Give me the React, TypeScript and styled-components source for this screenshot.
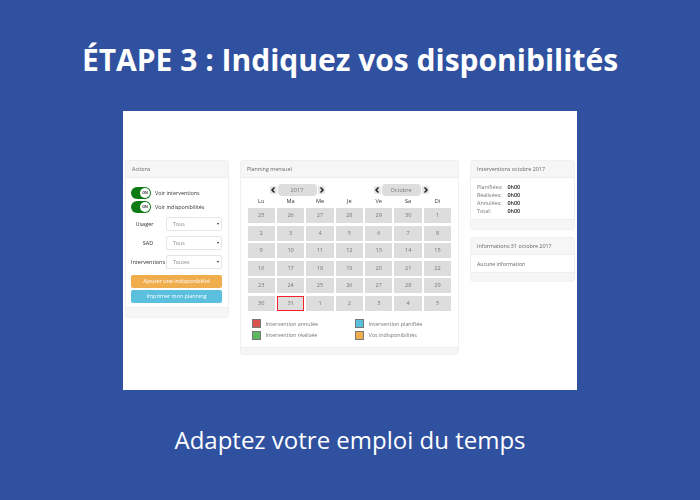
import React from "react";
import styled, { createGlobalStyle } from "styled-components";

const GlobalStyle = createGlobalStyle`
  html, body { margin: 0; padding: 0; }
  body { width: 700px; height: 500px; background: #30519f; overflow: hidden; font-family: "Open Sans", sans-serif; }
`;

const weeks = [
  ["25", "26", "27", "28", "29", "30", "1"],
  ["2", "3", "4", "5", "6", "7", "8"],
  ["9", "10", "11", "12", "13", "14", "15"],
  ["16", "17", "18", "19", "20", "21", "22"],
  ["23", "24", "25", "26", "27", "28", "29"],
  ["30", "31", "1", "2", "3", "4", "5"],
];
const dayNames = ["Lu", "Ma", "Me", "Je", "Ve", "Sa", "Di"];

const Slide = styled.div`
  width: 700px;
  height: 500px;
  display: flex;
  flex-direction: column;
  align-items: center;
  color: #fff;
`;

const Title = styled.h1`
  margin: 0;
  height: 111px;
  padding-top: 40px;
  box-sizing: border-box;
  font-size: 30px;
  line-height: 40px;
  font-weight: 700;
`;

const Subtitle = styled.p`
  margin: 0;
  padding-top: 34px;
  font-size: 24px;
  line-height: 32px;
`;

const Shot = styled.div`
  width: 454px;
  height: 279px;
  box-sizing: border-box;
  background: #fff;
  padding: 49px 2px 0;
  display: flex;
  align-items: flex-start;
  justify-content: space-between;
  color: #555;
  filter: blur(0.25px);
`;

const Column = styled.div`
  display: flex;
  flex-direction: column;
  gap: 7px;
`;

const Panel = styled.section<{ $width: number; $height: number }>`
  width: ${(p) => p.$width}px;
  height: ${(p) => p.$height}px;
  box-sizing: border-box;
  background: #fff;
  border: 1px solid #f0f0f0;
  border-radius: 3px;
  display: flex;
  flex-direction: column;
  overflow: hidden;
`;

const PanelHeader = styled.header`
  height: 16px;
  flex: none;
  padding-left: 6px;
  background: #f6f6f6;
  border-bottom: 1px solid #eeeeee;
  font-size: 5.4px;
  line-height: 16px;
  color: #666;
`;

const PanelBody = styled.div`
  flex: 1;
  min-height: 0;
`;

const PanelFooter = styled.footer<{ $height: number }>`
  height: ${(p) => p.$height}px;
  flex: none;
  background: #f6f6f6;
  border-top: 1px solid #eeeeee;
`;

const ActionsBody = styled(PanelBody)`
  padding: 8px 6px 0 5px;
  display: flex;
  flex-direction: column;
`;

const SwitchRow = styled.div`
  height: 14px;
  flex: none;
  display: flex;
  align-items: center;
  gap: 4px;
  font-size: 5.4px;
  color: #333;
`;

const Switch = styled.span`
  width: 20px;
  height: 12px;
  border-radius: 6px;
  background: #0f7a14;
  display: flex;
  align-items: center;
  justify-content: flex-end;
  padding-right: 1px;
  box-sizing: border-box;
`;

const SwitchKnob = styled.span`
  width: 10px;
  height: 10px;
  border-radius: 50%;
  background: #fff;
  font-size: 3.5px;
  line-height: 10px;
  text-align: center;
  font-weight: 700;
  color: #333;
`;

const FieldsWrap = styled.div`
  margin-top: 3px;
  display: flex;
  flex-direction: column;
  gap: 5px;
`;

const FieldRow = styled.div`
  height: 14px;
  display: flex;
  align-items: center;
  justify-content: space-between;
`;

const FieldLabel = styled.label<{ $inset?: number }>`
  width: 34px;
  box-sizing: border-box;
  padding-right: ${(p) => p.$inset ?? 0}px;
  font-size: 5.5px;
  text-align: center;
  color: #333;
`;

const Select = styled.div`
  width: 56px;
  height: 14px;
  box-sizing: border-box;
  border: 1px solid #e6e6e6;
  border-radius: 2px;
  padding: 0 2px 0 6px;
  display: flex;
  align-items: center;
  justify-content: space-between;
  font-size: 5.2px;
  color: #888;
`;

const Caret = styled.span`
  width: 0;
  height: 0;
  border-left: 1.5px solid transparent;
  border-right: 1.5px solid transparent;
  border-top: 2px solid #333;
`;

const Buttons = styled.div`
  margin-top: 6px;
  display: flex;
  flex-direction: column;
  gap: 2px;
`;

const ActionButton = styled.button<{ $color: string }>`
  width: 91px;
  height: 13px;
  padding: 0;
  border: none;
  border-radius: 2px;
  background: ${(p) => p.$color};
  color: #fff;
  font-family: inherit;
  font-size: 5.4px;
  line-height: 13px;
`;

const CalendarBody = styled(PanelBody)`
  padding: 5px 6px 0 6.5px;
`;

const Pickers = styled.div`
  display: flex;
  height: 13px;
  padding-left: 22px;
  gap: 49px;
`;

const Picker = styled.div`
  display: flex;
  align-items: center;
  gap: 1px;
`;

const PickerValue = styled.span`
  width: 39px;
  height: 12px;
  border-radius: 4px;
  background: #dddddd;
  text-align: center;
  font-size: 5.6px;
  line-height: 12px;
  color: #777;
`;

const ArrowBox = styled.svg`
  width: 7px;
  height: 8px;
  flex: none;
  background: #e6e6e6;
  border-radius: 1px;
  color: #222;
`;

const DayNames = styled.div`
  display: grid;
  grid-template-columns: repeat(7, 27.4px);
  column-gap: 2px;
  height: 12px;
`;

const DayName = styled.span`
  text-align: center;
  font-size: 5.6px;
  line-height: 10px;
  color: #333;
`;

const Days = styled.div`
  display: grid;
  grid-template-columns: repeat(7, 27.4px);
  grid-auto-rows: 15px;
  gap: 2.6px 2px;
`;

const Day = styled.div<{ $today?: boolean }>`
  box-sizing: border-box;
  background: #dddddd;
  border: ${(p) => (p.$today ? "1.5px solid #f5202a" : "none")};
  text-align: center;
  font-size: 5.6px;
  line-height: ${(p) => (p.$today ? 12 : 15)}px;
  color: #777;
`;

const Legend = styled.div`
  margin-top: 7px;
  padding-left: 4px;
  display: grid;
  grid-template-columns: 103px 1fr;
  grid-auto-rows: 11.5px;
`;

const LegendItem = styled.div`
  display: flex;
  align-items: center;
  gap: 5px;
  font-size: 5.4px;
  color: #777;
`;

const Swatch = styled.span<{ $color: string }>`
  width: 7px;
  height: 7px;
  background: ${(p) => p.$color};
  border: 0.5px solid #777;
`;

const StatsBody = styled(PanelBody)`
  padding: 5px 6px 0;
  display: grid;
  grid-template-columns: 30.5px 1fr;
  grid-auto-rows: 8px;
  font-size: 5.4px;
  line-height: 8px;
`;

const StatLabel = styled.span`
  color: #777;
`;

const StatValue = styled.span`
  color: #222;
  font-weight: 600;
`;

const InfoBody = styled(PanelBody)`
  padding: 5px 6px 0;
  font-size: 5.2px;
  line-height: 8px;
  color: #666;
`;

const ArrowIcon = ({ right }: { right?: boolean }) => (
  <ArrowBox viewBox="0 0 7 8" aria-hidden="true">
    <path
      d={right ? "M2.5 1.5 5 4 2.5 6.5" : "M4.5 1.5 2 4 4.5 6.5"}
      fill="none"
      stroke="currentColor"
      strokeWidth="1.5"
    />
  </ArrowBox>
);

export default function App() {
  return (
    <>
      <GlobalStyle />
      <Slide>
        <Title>ÉTAPE 3 : Indiquez vos disponibilités</Title>
        <Shot>
          <Panel $width={104} $height={158}>
            <PanelHeader>Actions</PanelHeader>
            <ActionsBody>
              <SwitchRow>
                <Switch><SwitchKnob>ON</SwitchKnob></Switch>
                Voir interventions
              </SwitchRow>
              <SwitchRow>
                <Switch><SwitchKnob>ON</SwitchKnob></Switch>
                Voir indisponibilités
              </SwitchRow>
              <FieldsWrap>
                <FieldRow>
                  <FieldLabel $inset={7}>Usager</FieldLabel>
                  <Select>Tous<Caret /></Select>
                </FieldRow>
                <FieldRow>
                  <FieldLabel>SAD</FieldLabel>
                  <Select>Tous<Caret /></Select>
                </FieldRow>
                <FieldRow>
                  <FieldLabel>Interventions</FieldLabel>
                  <Select>Toutes<Caret /></Select>
                </FieldRow>
              </FieldsWrap>
              <Buttons>
                <ActionButton $color="#f0ad4e">Ajouter une indisponibilité</ActionButton>
                <ActionButton $color="#5bc0de">Imprimer mon planning</ActionButton>
              </Buttons>
            </ActionsBody>
            <PanelFooter $height={9} />
          </Panel>

          <Panel $width={219} $height={195}>
            <PanelHeader>Planning mensuel</PanelHeader>
            <CalendarBody>
              <Pickers>
                <Picker><ArrowIcon /><PickerValue>2017</PickerValue><ArrowIcon right /></Picker>
                <Picker><ArrowIcon /><PickerValue>Octobre</PickerValue><ArrowIcon right /></Picker>
              </Pickers>
              <DayNames>
                {dayNames.map((d) => <DayName key={d}>{d}</DayName>)}
              </DayNames>
              <Days>
                {weeks.flat().map((d, i) => <Day key={i} $today={i === 36}>{d}</Day>)}
              </Days>
              <Legend>
                <LegendItem><Swatch $color="#d9534f" />Intervention annulée</LegendItem>
                <LegendItem><Swatch $color="#5bc0de" />Intervention planifiée</LegendItem>
                <LegendItem><Swatch $color="#5cb85c" />Intervention réalisée</LegendItem>
                <LegendItem><Swatch $color="#f0ad4e" />Vos indisponibilités</LegendItem>
              </Legend>
            </CalendarBody>
            <PanelFooter $height={6} />
          </Panel>

          <Column>
            <Panel $width={105} $height={70}>
              <PanelHeader>Interventions octobre 2017</PanelHeader>
              <StatsBody>
                <StatLabel>Planifiées:</StatLabel><StatValue>0h00</StatValue>
                <StatLabel>Réalisées:</StatLabel><StatValue>0h00</StatValue>
                <StatLabel>Annulées:</StatLabel><StatValue>0h00</StatValue>
                <StatLabel>Total:</StatLabel><StatValue>0h00</StatValue>
              </StatsBody>
              <PanelFooter $height={9} />
            </Panel>
            <Panel $width={105} $height={45}>
              <PanelHeader>Informations 31 octobre 2017</PanelHeader>
              <InfoBody>Aucune information</InfoBody>
              <PanelFooter $height={8} />
            </Panel>
          </Column>
        </Shot>
        <Subtitle>Adaptez votre emploi du temps</Subtitle>
      </Slide>
    </>
  );
}
